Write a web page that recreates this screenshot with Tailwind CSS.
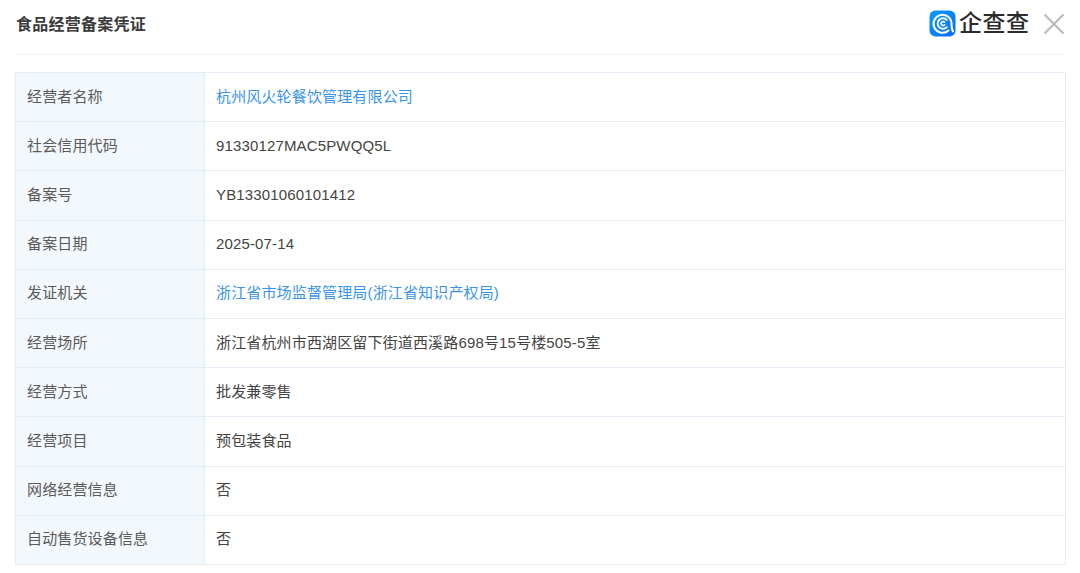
<!DOCTYPE html>
<html lang="zh-CN"><head><meta charset="utf-8">
<script src="https://cdn.jsdelivr.net/npm/@tailwindcss/browser@4"></script>
</head>
<body class="bg-white w-[1080px] h-[573px] overflow-hidden font-['Liberation_Sans','Noto_Sans_CJK_SC',sans-serif] text-[15px] tracking-[0.15px] text-[#444]">
<header class="h-[55px] mx-[15px] border-b border-[#eef1f5] flex items-center justify-between">
  <h1 class="text-[16px] font-bold text-[#3a3a3a] tracking-[0.25px] pb-[5px] pl-px">食品经营备案凭证</h1>
  <div class="flex items-center pb-[7px] -mr-px">
    <svg width="27" height="27" viewBox="0 0 27 27" class="mr-[3px] -translate-x-px">
      <defs><linearGradient id="g" x1="0" y1="0" x2="1" y2="1"><stop offset="0" stop-color="#0a9bff"/><stop offset="1" stop-color="#0a6cf5"/></linearGradient></defs>
      <rect width="26" height="26" x="0.5" y="0.5" rx="6" fill="url(#g)"/>
      <path d="M19.5 20.5 A9 9 0 1 1 22.5 13.5 C22.5 17 22.8 19.5 24 21.5" fill="none" stroke="#fff" stroke-width="2" stroke-linecap="round"/>
      <path d="M17.8 9.8 A5.3 5.3 0 1 0 17.8 17.2" fill="none" stroke="#fff" stroke-width="1.9" stroke-linecap="round"/>
      <path d="M15.6 12.2 A2 2 0 1 0 15.6 14.8" fill="none" stroke="#fff" stroke-width="1.6" stroke-linecap="round"/>
    </svg>
    <span class="text-[23px] leading-[27px] tracking-[0.5px] text-[#2b2b2b] font-medium w-[71px] whitespace-nowrap -ml-px">企查查</span>
    <svg width="22" height="22" viewBox="0 0 22 22" class="ml-[14px] -translate-x-px mt-px" fill="none" stroke="#bdbdbd" stroke-width="2.4"><path d="M1.5 1.5 20.5 20.5M20.5 1.5 1.5 20.5"/></svg>
  </div>
</header>
<main class="mx-[15px] mt-[17px] w-[1051px] h-[493px] border border-[#e4edf6] flex flex-col divide-y divide-[#e4edf6]">
  <div class="flex-1 flex"><div class="w-[189px] bg-[#f3f8fd] border-r border-[#e4edf6] pl-[11px] pb-[0.5px] flex items-center text-[#5a5a5a]">经营者名称</div><div class="flex-1 pl-[11px] pb-[0.5px] flex items-center text-[#3a94ea]">杭州风火轮餐饮管理有限公司</div></div>
  <div class="flex-1 flex"><div class="w-[189px] bg-[#f3f8fd] border-r border-[#e4edf6] pl-[11px] pb-[0.5px] flex items-center text-[#5a5a5a]">社会信用代码</div><div class="flex-1 pl-[11px] pb-[0.5px] flex items-center">91330127MAC5PWQQ5L</div></div>
  <div class="flex-1 flex"><div class="w-[189px] bg-[#f3f8fd] border-r border-[#e4edf6] pl-[11px] pb-[0.5px] flex items-center text-[#5a5a5a]">备案号</div><div class="flex-1 pl-[11px] pb-[0.5px] flex items-center">YB13301060101412</div></div>
  <div class="flex-1 flex"><div class="w-[189px] bg-[#f3f8fd] border-r border-[#e4edf6] pl-[11px] pb-[0.5px] flex items-center text-[#5a5a5a]">备案日期</div><div class="flex-1 pl-[11px] pb-[0.5px] flex items-center">2025-07-14</div></div>
  <div class="flex-1 flex"><div class="w-[189px] bg-[#f3f8fd] border-r border-[#e4edf6] pl-[11px] pb-[0.5px] flex items-center text-[#5a5a5a]">发证机关</div><div class="flex-1 pl-[11px] pb-[0.5px] flex items-center text-[#3a94ea]">浙江省市场监督管理局(浙江省知识产权局)</div></div>
  <div class="flex-1 flex"><div class="w-[189px] bg-[#f3f8fd] border-r border-[#e4edf6] pl-[11px] pb-[0.5px] flex items-center text-[#5a5a5a]">经营场所</div><div class="flex-1 pl-[11px] pb-[0.5px] flex items-center">浙江省杭州市西湖区留下街道西溪路698号15号楼505-5室</div></div>
  <div class="flex-1 flex"><div class="w-[189px] bg-[#f3f8fd] border-r border-[#e4edf6] pl-[11px] pb-[0.5px] flex items-center text-[#5a5a5a]">经营方式</div><div class="flex-1 pl-[11px] pb-[0.5px] flex items-center">批发兼零售</div></div>
  <div class="flex-1 flex"><div class="w-[189px] bg-[#f3f8fd] border-r border-[#e4edf6] pl-[11px] pb-[0.5px] flex items-center text-[#5a5a5a]">经营项目</div><div class="flex-1 pl-[11px] pb-[0.5px] flex items-center">预包装食品</div></div>
  <div class="flex-1 flex"><div class="w-[189px] bg-[#f3f8fd] border-r border-[#e4edf6] pl-[11px] pb-[0.5px] flex items-center text-[#5a5a5a]">网络经营信息</div><div class="flex-1 pl-[11px] pb-[0.5px] flex items-center">否</div></div>
  <div class="flex-1 flex"><div class="w-[189px] bg-[#f3f8fd] border-r border-[#e4edf6] pl-[11px] pb-[0.5px] flex items-center text-[#5a5a5a]">自动售货设备信息</div><div class="flex-1 pl-[11px] pb-[0.5px] flex items-center">否</div></div>
</main>
</body></html>
